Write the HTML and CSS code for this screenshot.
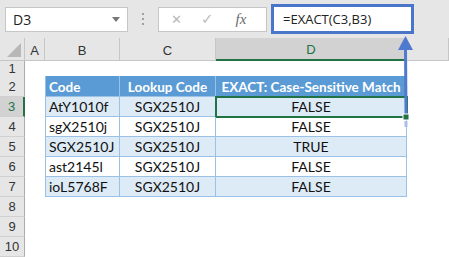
FILE: index.html
```html
<!DOCTYPE html>
<html lang="en">
<head>
  <meta charset="UTF-8" />
  <title>EXACT function</title>
  <link rel="stylesheet" href="styles.css">
</head>
<body>
  <div class="app">
    <div class="toolbar">
      <div class="namebox"><span>D3</span><span class="caret"></span></div>
      <div class="grip"><i></i><i></i><i></i></div>
      <div class="btns">
        <span class="cancel">&#x2715;</span>
        <span class="ok">&#x2713;</span>
        <span class="fx">fx</span>
      </div>
      <div class="formula">=EXACT(C3,B3)</div>
    </div>

    <div class="sheet">
      <div class="row colhead">
        <div class="corner"></div>
        <div class="ch">A</div>
        <div class="ch">B</div>
        <div class="ch">C</div>
        <div class="ch on">D</div>
        <div class="ch"></div>
      </div>
      <div class="row r1">
        <div class="rh">1</div><div></div><div></div><div></div><div></div><div></div>
      </div>
      <div class="row r2">
        <div class="rh">2</div><div></div>
        <div class="th first left">Code</div>
        <div class="th">Lookup Code</div>
        <div class="th">EXACT: Case-Sensitive Match</div>
        <div></div>
      </div>
      <div class="row">
        <div class="rh on">3</div><div></div>
        <div class="td first left band">AtY1010f</div>
        <div class="td band">SGX2510J</div>
        <div class="td band sel">FALSE</div>
        <div></div>
      </div>
      <div class="row">
        <div class="rh">4</div><div></div>
        <div class="td first left">sgX2510j</div>
        <div class="td">SGX2510J</div>
        <div class="td">FALSE</div>
        <div></div>
      </div>
      <div class="row">
        <div class="rh">5</div><div></div>
        <div class="td first left band">SGX2510J</div>
        <div class="td band">SGX2510J</div>
        <div class="td band">TRUE</div>
        <div></div>
      </div>
      <div class="row">
        <div class="rh">6</div><div></div>
        <div class="td first left">ast2145l</div>
        <div class="td">SGX2510J</div>
        <div class="td">FALSE</div>
        <div></div>
      </div>
      <div class="row">
        <div class="rh">7</div><div></div>
        <div class="td first left band">ioL5768F</div>
        <div class="td band">SGX2510J</div>
        <div class="td band">FALSE</div>
        <div></div>
      </div>
      <div class="row">
        <div class="rh">8</div><div></div><div></div><div></div><div></div><div></div>
      </div>
      <div class="row">
        <div class="rh">9</div><div></div><div></div><div></div><div></div><div></div>
      </div>
      <div class="row">
        <div class="rh">10</div><div></div><div></div><div></div><div></div><div></div>
      </div>
    </div>

    <svg class="arrow" width="449" height="257" viewBox="0 0 449 257">
      <line x1="406" y1="127" x2="406" y2="121" stroke="#a9bfe6" stroke-width="3" />
      <line x1="406" y1="114" x2="405.5" y2="48" stroke="#4f7ad0" stroke-width="3" />
      <polygon points="405.5,36 398,50 413,50" fill="#4f7ad0" />
      <rect x="403" y="114" width="6" height="6" fill="#217346" stroke="#fff" stroke-width="1" />
    </svg>
  </div>
</body>
</html>
```

FILE: styles.css
```css
body {
  margin: 0;
  background: #fff;
}

.app {
  position: relative;
  width: 449px;
  height: 257px;
  overflow: hidden;
  font-family: 'Liberation Sans', Arial, sans-serif;
}

/* formula bar */
.toolbar {
  height: 38px;
  background: #e6e6e6;
  display: flex;
  align-items: center;
  padding-left: 5px;
}

.namebox {
  width: 123px;
  height: 25px;
  box-sizing: border-box;
  background: #fff;
  border: 1px solid #c6c6c6;
  display: flex;
  align-items: center;
  justify-content: space-between;
  padding: 0 7px 0 7px;
  font-family: 'Open Sans', sans-serif;
  font-size: 14px;
  color: #222;
}

.caret {
  width: 0;
  height: 0;
  border-left: 4px solid transparent;
  border-right: 4px solid transparent;
  border-top: 5px solid #777;
}

.grip {
  width: 30px;
  display: flex;
  flex-direction: column;
  align-items: center;
  gap: 3px;
}

.grip i {
  width: 2px;
  height: 2px;
  background: #a0a0a0;
}

.btns {
  width: 109px;
  height: 25px;
  box-sizing: border-box;
  background: #fff;
  border: 1px solid #c6c6c6;
  display: flex;
  align-items: center;
  padding-left: 12px;
  gap: 19px;
  font-size: 14px;
}

.cancel {
  color: #b8b8b8;
  font-size: 13px;
}

.ok {
  color: #bdbdbd;
  font-size: 15px;
  font-family: 'DejaVu Sans', sans-serif;
}

.fx {
  color: #6a6a6a;
  font-family: 'Liberation Serif', serif;
  font-style: italic;
  font-size: 15px;
  margin-left: 3px;
}

.formula {
  margin-left: 4px;
  width: 143px;
  height: 30px;
  box-sizing: border-box;
  background: #fff;
  border: 3px solid #4a76c9;
  display: flex;
  align-items: center;
  padding-left: 9px;
  font-family: 'Open Sans', sans-serif;
  font-size: 13px;
  color: #222;
}

/* grid */
.row {
  display: grid;
  grid-template-columns: 25px 20px 75px 96px 191px 1fr;
  height: 20px;
}

.row > div {
  box-sizing: border-box;
}

.colhead {
  height: 23px;
  background: #e6e6e6;
}

.r1 {
  height: 15px;
}

.r2 {
  height: 21px;
}

.corner {
  position: relative;
  border-right: 1px solid #c6c6c6;
  border-bottom: 1px solid #c6c6c6;
}

.corner::after {
  content: '';
  position: absolute;
  right: 3px;
  bottom: 3px;
  width: 14px;
  height: 14px;
  background: #b7b7b7;
  clip-path: polygon(100% 0, 100% 100%, 0 100%);
}

.ch {
  border-right: 1px solid #c6c6c6;
  border-bottom: 1px solid #c6c6c6;
  font-size: 13px;
  color: #333;
  display: flex;
  align-items: center;
  justify-content: center;
  padding-top: 2px;
}

.ch.on {
  background: #d2d2d2;
  color: #217346;
  border-bottom: 2px solid #217346;
}

.rh {
  background: #e6e6e6;
  border-right: 1px solid #ababab;
  border-bottom: 1px solid #d0d0d0;
  font-size: 13px;
  color: #333;
  display: flex;
  align-items: center;
  justify-content: center;
}

.rh.on {
  background: #d2d2d2;
  color: #217346;
  border-right: 2px solid #217346;
}

.th, .td {
  font-family: Lato, 'Liberation Sans', sans-serif;
  font-size: 14px;
  display: flex;
  align-items: center;
  justify-content: center;
  white-space: nowrap;
  border-right: 1px solid #9bc2e6;
  border-bottom: 1px solid #9bc2e6;
}

.th {
  background: #5b9bd5;
  color: #fff;
  font-weight: bold;
  font-size: 13.5px;
  padding-top: 1px;
}

.td {
  color: #111;
}

.first {
  border-left: 1px solid #9bc2e6;
}

.left {
  justify-content: flex-start;
  padding-left: 3px;
}

.band {
  background: #ddebf7;
}

.sel {
  outline: 2px solid #217346;
  outline-offset: -1px;
}

.arrow {
  position: absolute;
  left: 0;
  top: 0;
  pointer-events: none;
}
```
